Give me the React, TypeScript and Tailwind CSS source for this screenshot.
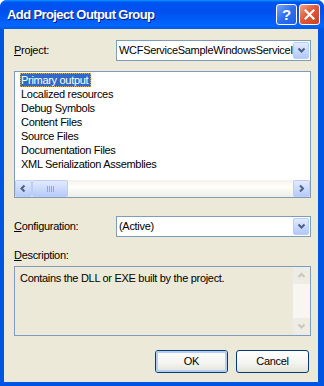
import type { ReactNode } from "react";

const ITEMS = [
  "Primary output",
  "Localized resources",
  "Debug Symbols",
  "Content Files",
  "Source Files",
  "Documentation Files",
  "XML Serialization Assemblies",
];

export default function App() {
  return (
    <div className="flex h-[386px] w-[324px] flex-col overflow-hidden rounded-t-[7px] bg-[#0054E3] font-['Liberation_Sans',Arial,sans-serif] text-[11px] tracking-[-0.3px] text-black">
      <TitleBar />
      <div className="mb-[4px] ml-[4px] mr-[6px] flex flex-1 flex-col bg-[#ECE9D8] pl-[10px] pr-[7px] pt-[11px]">
        <div className="flex h-[21px] items-center">
          <span className="w-[102px]">
            <u>P</u>roject:
          </span>
          <ComboBox value="WCFServiceSampleWindowsServiceI" />
        </div>

        <div className="mt-[10px] flex h-[127px] w-[297px] flex-col border border-[#7F9DB9] bg-white">
          <div className="flex-1 pl-[5px] pt-[1px]">
            {ITEMS.map((item, i) => (
              <div key={item} className="flex h-[14px] items-center">
                <span
                  className={
                    i === 0
                      ? "bg-[#316AC5] pl-[1px] pr-[3px] leading-[14px] text-white outline outline-1 outline-dotted outline-[#D9A84A] -outline-offset-1"
                      : "px-[1px] leading-[14px]"
                  }
                >
                  {item}
                </span>
              </div>
            ))}
          </div>
          <HScrollBar />
        </div>

        <div className="mt-[18px] flex h-[21px] items-center">
          <span className="w-[102px]">
            <u>C</u>onfiguration:
          </span>
          <ComboBox value="(Active)" />
        </div>

        <div className="mt-[12px] h-[13px] leading-[13px]">
          <u>D</u>escription:
        </div>
        <div className="mt-[4px] flex h-[70px] w-[297px] border border-[#7F9DB9] bg-[#ECE9D8]">
          <div className="flex-1 pl-[5px] pt-[4px] leading-[14px]">
            Contains the DLL or EXE built by the project.
          </div>
          <VScrollDisabled />
        </div>

        <div className="mt-[14px] flex justify-end gap-[8px] pr-[2px]">
          <XpButton isDefault>OK</XpButton>
          <XpButton>Cancel</XpButton>
        </div>
      </div>
    </div>
  );
}

function TitleBar() {
  return (
    <div className="flex h-[29px] shrink-0 items-center bg-[linear-gradient(180deg,#0997FF_0%,#0053EE_8%,#0050EE_40%,#0066FF_88%,#0058E6_100%)] pl-[7px] pr-[4px]">
      <span className="flex-1 text-[13px] font-bold tracking-[-0.6px] text-white [text-shadow:1px_1px_0_#0A1883]">
        Add Project Output Group
      </span>
      <div className="flex gap-[2px]">
        <div className="flex h-[21px] w-[21px] items-center justify-center rounded-[3px] border border-white bg-[linear-gradient(135deg,#7BA4F7_0%,#2D6EF0_50%,#1F5FE0_100%)] text-[15px] font-bold leading-none tracking-normal text-white">
          ?
        </div>
        <div className="flex h-[21px] w-[21px] items-center justify-center rounded-[3px] border border-white bg-[linear-gradient(135deg,#F3A08A_0%,#E25A35_45%,#C8421E_100%)]">
          <svg width="11" height="11" viewBox="0 0 11 11">
            <path d="M1.5 1.5 9.5 9.5M9.5 1.5 1.5 9.5" stroke="white" strokeWidth="2.2" strokeLinecap="square" />
          </svg>
        </div>
      </div>
    </div>
  );
}

function ComboBox({ value }: { value: string }) {
  return (
    <div className="flex h-[21px] w-[195px] items-center border border-[#7F9DB9] bg-white">
      <span className="flex-1 overflow-hidden whitespace-nowrap pl-[2px]">{value}</span>
      <div className="mr-[1px] flex h-[17px] w-[16px] shrink-0 items-center justify-center rounded-[2px] border border-[#BBCDF5] bg-[linear-gradient(180deg,#E2EBFE_0%,#C6D6FC_60%,#B4C8F8_100%)]">
        <Chevron dir="down" color="#4D6185" />
      </div>
    </div>
  );
}

function Chevron({ dir, color }: { dir: "up" | "down" | "left" | "right"; color: string }) {
  const d = {
    down: "M1.5 2.5 4.5 5.5 7.5 2.5",
    up: "M1.5 6 4.5 3 7.5 6",
    left: "M5.5 1.5 2.5 4.5 5.5 7.5",
    right: "M3 1.5 6 4.5 3 7.5",
  }[dir];
  return (
    <svg width="9" height="9" viewBox="0 0 9 9">
      <path d={d} fill="none" stroke={color} strokeWidth="2" />
    </svg>
  );
}

function ScrollBtn({ children, disabled }: { children: ReactNode; disabled?: boolean }) {
  return (
    <div
      className={
        disabled
          ? "flex h-[17px] w-[17px] items-center justify-center rounded-[2px] border border-[#E8EBF0] bg-[#EEEDE5]"
          : "flex h-[17px] w-[17px] items-center justify-center rounded-[2px] border border-[#BCCEF6] bg-[linear-gradient(180deg,#E1EAFE_0%,#C8D8FC_60%,#B7CBF8_100%)]"
      }
    >
      {children}
    </div>
  );
}

function HScrollBar() {
  return (
    <div className="flex h-[17px] items-center bg-[linear-gradient(180deg,#F3F1EC_0%,#FEFEFB_40%,#EEEDE5_100%)]">
      <ScrollBtn>
        <Chevron dir="left" color="#4D6185" />
      </ScrollBtn>
      <div className="flex h-[17px] w-[36px] items-center justify-center rounded-[2px] border border-[#BCCEF6] bg-[linear-gradient(180deg,#E1EAFE_0%,#C8D8FC_60%,#B7CBF8_100%)]">
        <div className="flex gap-[1px]">
          {[0, 1, 2, 3].map((i) => (
            <div key={i} className="h-[6px] w-[1px] bg-[#8CA8E4]" />
          ))}
        </div>
      </div>
      <div className="flex-1" />
      <ScrollBtn>
        <Chevron dir="right" color="#4D6185" />
      </ScrollBtn>
    </div>
  );
}

function VScrollDisabled() {
  return (
    <div className="flex w-[17px] flex-col justify-between bg-[#F7F6F1]">
      <ScrollBtn disabled>
        <Chevron dir="up" color="#C9C7BA" />
      </ScrollBtn>
      <ScrollBtn disabled>
        <Chevron dir="down" color="#C9C7BA" />
      </ScrollBtn>
    </div>
  );
}

function XpButton({ children, isDefault }: { children: ReactNode; isDefault?: boolean }) {
  return (
    <div className="h-[23px] w-[73px] rounded-[3px] border border-[#003C74] bg-[linear-gradient(180deg,#FFFFFF_0%,#F3F3EF_60%,#E3E2DA_100%)]">
      <div
        className={
          isDefault
            ? "flex h-full w-full items-center justify-center rounded-[2px] border-2 border-[#B5CCF3]"
            : "flex h-full w-full items-center justify-center"
        }
      >
        {children}
      </div>
    </div>
  );
}
